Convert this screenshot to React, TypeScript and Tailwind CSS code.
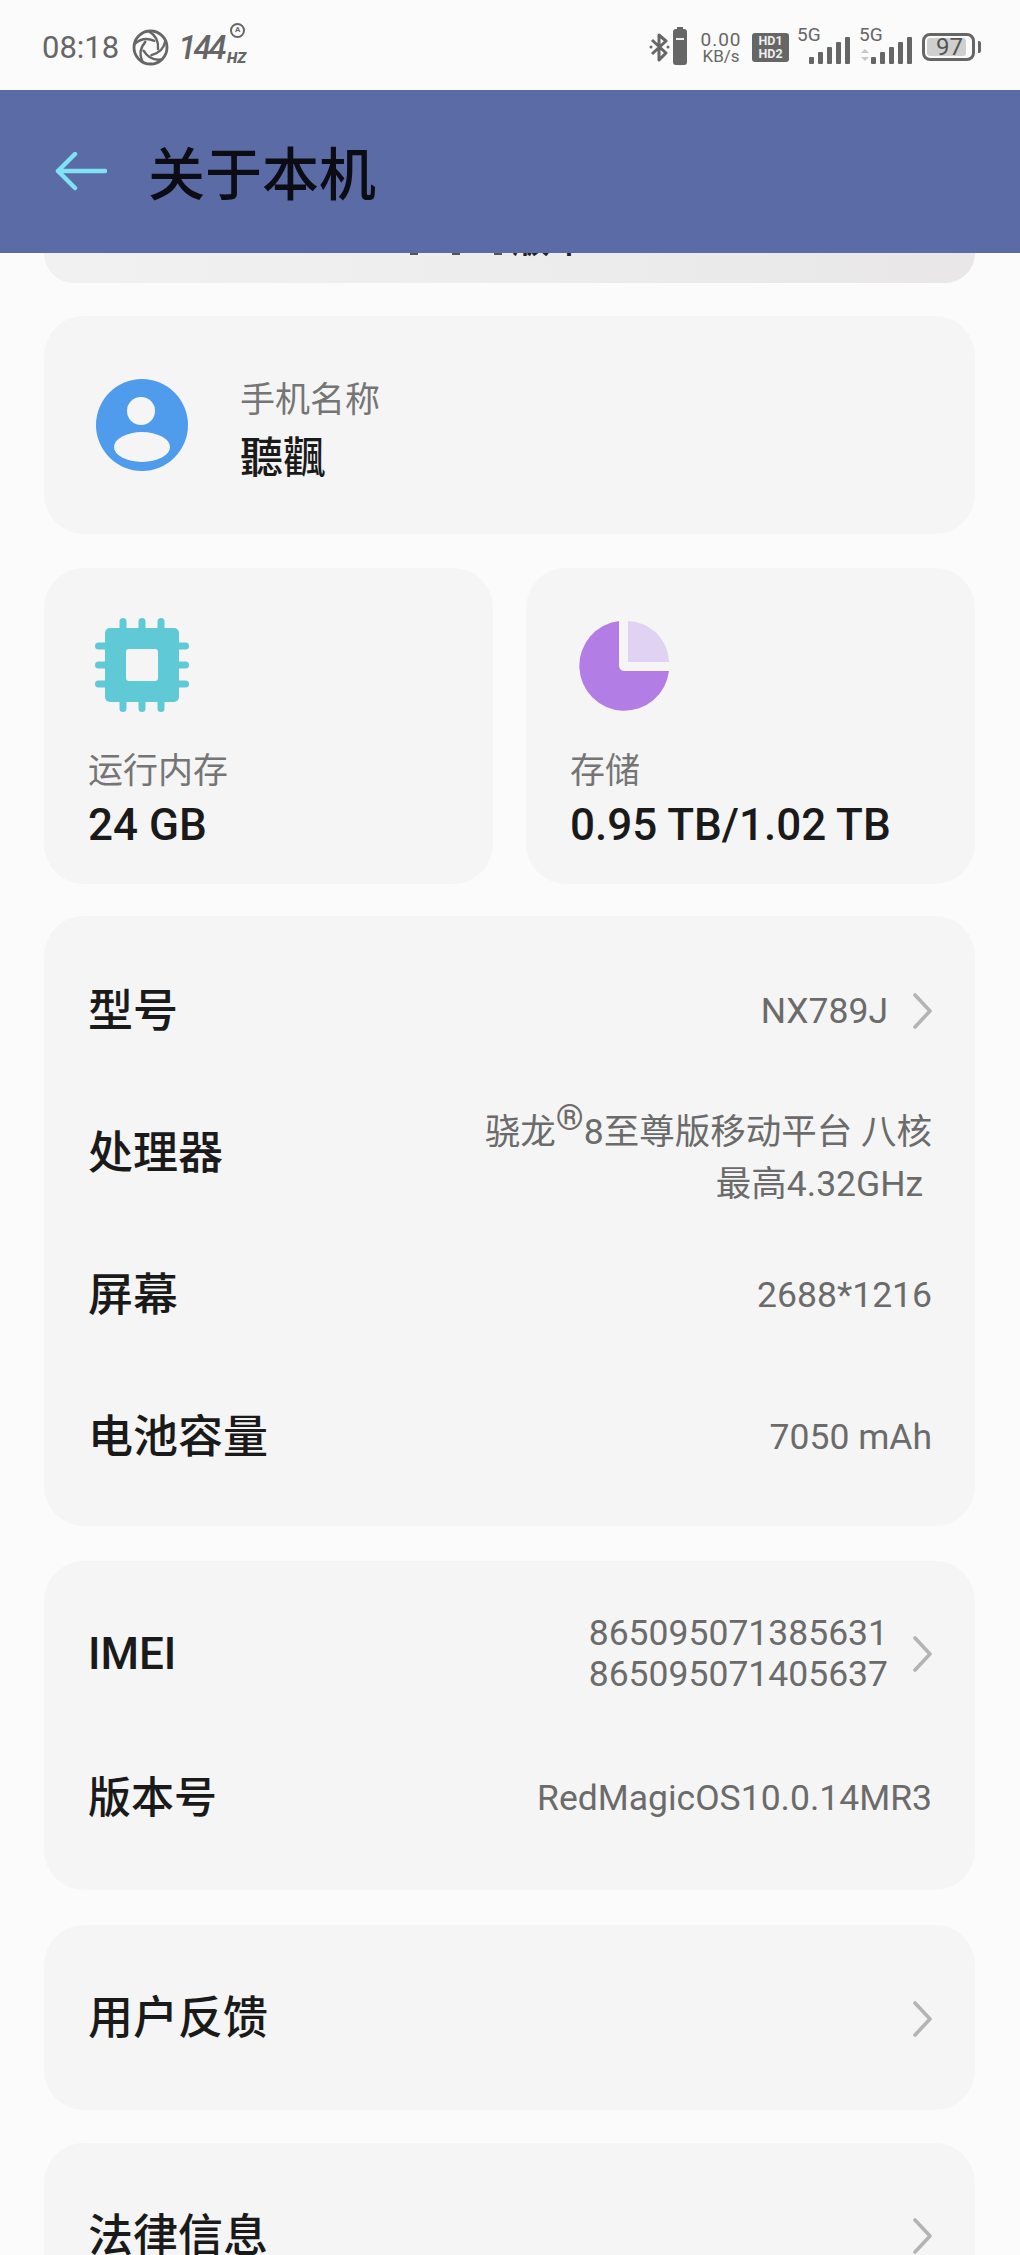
import React from "react";

const LATIN = "font-['Roboto','Noto_Sans_CJK_SC',sans-serif]";

function Chevron() {
  return (
    <svg width="19" height="36" viewBox="0 0 19 36" className="shrink-0">
      <path d="M2 2 L17 18 L2 34" fill="none" stroke="#b4b4b4" strokeWidth="3.6" strokeLinecap="round" strokeLinejoin="round" />
    </svg>
  );
}

function Row({ label, children, h, chevron, size = "text-[45px]" }: { label: string; children?: React.ReactNode; h: string; chevron?: boolean; size?: string }) {
  return (
    <div className={`flex items-center justify-between ${h}`}>
      <div className={`${size} font-medium leading-none text-[#1a1a1a]`}>{label}</div>
      <div className="flex items-center gap-[25px]">
        {children}
        {chevron ? <Chevron /> : null}
      </div>
    </div>
  );
}

function Val({ children }: { children: React.ReactNode }) {
  return <div className="text-[35.5px] leading-[52px] text-[#6b6b6b] text-right">{children}</div>;
}

function Aperture() {
  return (
    <svg width="37" height="37" viewBox="0 0 37 37" fill="none" stroke="#666" strokeWidth="2.4" strokeLinecap="round">
      <circle cx="18.5" cy="18.5" r="16.5" strokeWidth="2.8" />
      {[0, 72, 144, 216, 288].map((a) => (
        <path key={a} d="M17 2.5 Q27 8 26 20" transform={`rotate(${a} 18.5 18.5)`} />
      ))}
    </svg>
  );
}

function Signal({ updown }: { updown?: boolean }) {
  const bars = [7, 12, 17, 22, 27];
  return (
    <div className="relative w-[53px] h-[33px]">
      <span className="absolute left-0 top-[-6px] text-[19px] leading-[20px] text-[#666]">5G</span>
      {updown ? (
        <svg className="absolute left-[1px] top-[17px]" width="10" height="14" viewBox="0 0 10 14">
          <path d="M5 1 L9 5 H1 Z M5 13 L9 9 H1 Z" fill="#c8c8c8" />
        </svg>
      ) : null}
      <div className="absolute right-0 bottom-0 flex items-end gap-[4px]">
        {bars.map((b) => (
          <div key={b} className="w-[5px] bg-[#666] rounded-[1px]" style={{ height: b }} />
        ))}
      </div>
    </div>
  );
}

function StatusBar() {
  return (
    <div className={`flex items-center justify-between h-[90px] pl-[42px] pr-[45px] pt-[4px] ${LATIN}`}>
      <div className="flex items-center text-[#666]">
        <span className="text-[31px] leading-none">08:18</span>
        <span className="ml-[13px] flex"><Aperture /></span>
        <div className="relative ml-[9px] w-[68px] h-[36px]">
          <span className="absolute left-0 top-[3px] text-[33px] leading-[32px] italic font-medium tracking-[-3px]">144</span>
          <span className="absolute right-0 bottom-[0px] text-[15px] leading-[14px] italic font-black">HZ</span>
          <span className="absolute right-[1px] top-[-6px] w-[15px] h-[15px] rounded-full border-[2.5px] border-[#666] text-[8px] leading-[10px] text-center font-bold">A</span>
        </div>
      </div>
      <div className="flex items-center">
        <svg width="21" height="30" viewBox="0 0 21 30" fill="none" stroke="#666" strokeWidth="3">
          <path d="M3 8 L17 21 L10 28 V3 L17 9 L3 22" strokeLinejoin="round" />
          <circle cx="2" cy="15" r="1.5" fill="#666" stroke="none" />
          <circle cx="19" cy="15" r="1.5" fill="#666" stroke="none" />
        </svg>
        <div className="relative ml-[3px] w-[14px] h-[36px] bg-[#666] rounded-[3px]">
          <div className="absolute left-[4px] top-[-2px] w-[6px] h-[3px] bg-[#666]" />
          <div className="absolute left-[3px] top-[9px] w-[8px] h-[2px] bg-[#eee]" />
        </div>
        <div className="ml-[14px] w-[40px] flex flex-col items-center text-[#666]">
          <span className="text-[19px] leading-[17px] tracking-[1px]">0.00</span>
          <span className="text-[17px] leading-[16px]">KB/s</span>
        </div>
        <div className="ml-[11px] w-[37px] h-[29px] rounded-[3px] bg-[#666] flex flex-col items-center justify-center text-[#eee] text-[12.5px] leading-[13px] font-bold">
          <span>HD1</span>
          <span>HD2</span>
        </div>
        <div className="ml-[8px]"><Signal /></div>
        <div className="ml-[9px]"><Signal updown /></div>
        <div className="relative ml-[10px] w-[53px] h-[28px] border-[3px] border-[#666] rounded-[8px] flex items-center">
          <div className="ml-[2px] w-[39px] h-[18px] bg-[#cfcfcf] rounded-[3px]" />
          <span className="absolute left-[11px] top-[0px] text-[24px] leading-[22px] text-[#555]">97</span>
          <div className="absolute right-[-9px] top-[5px] w-[3px] h-[12px] bg-[#666] rounded-r-[2px]" />
        </div>
      </div>
    </div>
  );
}

function Header() {
  return (
    <div className="flex items-center h-[163px] bg-[#5b6ba5] pl-[55px]">
      <svg width="52" height="40" viewBox="0 0 52 40" fill="none" stroke="#7fe3f5" strokeWidth="4.5" strokeLinecap="round" strokeLinejoin="round">
        <path d="M50 19 H3 M20 2 L3 19 L20 36" />
      </svg>
      <div className="ml-[41px] mt-[7px] text-[57px] font-medium leading-none text-[#0c0c14]">关于本机</div>
    </div>
  );
}

function Chip() {
  return (
    <svg width="94" height="94" viewBox="0 0 94 94" fill="#5fc9d6">
      <rect x="10" y="10" width="74" height="74" rx="5" />
      {[28, 47, 66].map((p) => (
        <g key={p}>
          <rect x={p - 3.5} y="0" width="7" height="14" rx="3.5" />
          <rect x={p - 3.5} y="80" width="7" height="14" rx="3.5" />
          <rect x="0" y={p - 3.5} width="14" height="7" rx="3.5" />
          <rect x="80" y={p - 3.5} width="14" height="7" rx="3.5" />
        </g>
      ))}
      <rect x="31" y="31" width="32" height="32" rx="3" fill="#f5f5f5" />
    </svg>
  );
}

function Pie() {
  return (
    <svg width="92" height="92" viewBox="0 0 92 92">
      <path d="M41 1 A45 45 0 1 0 91 51 H47 Q41 51 41 45 Z" fill="#b37de6" />
      <path d="M50 1 A42 42 0 0 1 91 42 H50 Z" fill="#e0d2f2" />
    </svg>
  );
}

function Avatar() {
  return (
    <svg width="92" height="92" viewBox="0 0 92 92">
      <circle cx="46" cy="46" r="46" fill="#4f9bec" />
      <circle cx="45" cy="32" r="14" fill="#f5f5f5" />
      <ellipse cx="46" cy="68" rx="28" ry="15" fill="#f5f5f5" />
    </svg>
  );
}

export default function App() {
  return (
    <div className={`w-[1020px] h-[2255px] overflow-hidden bg-[#fbfbfb] ${LATIN}`}>
      <StatusBar />
      <Header />
      <div className="pl-[44px] pr-[45px]">
        <div className="relative h-[30px] rounded-b-[36px] overflow-hidden bg-gradient-to-r from-[#f1f1f1] via-[#ededed] to-[#e9e7e7]">
          <div className="absolute left-[366px] top-0 flex gap-[34px]">
            <div className="w-[8px] h-[2px] bg-[#555]" />
            <div className="w-[8px] h-[2px] bg-[#555]" />
            <div className="w-[8px] h-[2px] bg-[#555]" />
          </div>
          <div className="absolute left-[468px] top-[-36px] text-[38px] leading-[44px] font-medium text-[#222] whitespace-nowrap">版本</div>
        </div>

        <div className="mt-[33px] flex items-center h-[218px] rounded-[40px] bg-[#f5f5f5] pl-[52px]">
          <Avatar />
          <div className="ml-[52px] mt-[8px] flex flex-col">
            <div className="text-[35px] leading-[50px] text-[#757575]">手机名称</div>
            <div className="text-[43px] leading-[56px] font-medium text-[#1a1a1a] font-['Noto_Sans_CJK_TC',sans-serif]">聽飌</div>
          </div>
        </div>

        <div className="mt-[34px] grid grid-cols-2 gap-[33px]">
          <div className="h-[316px] rounded-[40px] bg-[#f5f5f5] pl-[44px] pt-[50px]">
            <div className="ml-[7px]"><Chip /></div>
            <div className="mt-[35px] text-[35px] leading-[50px] text-[#757575]">运行内存</div>
            <div className="mt-[3px] text-[44px] leading-[50px] font-medium text-[#1a1a1a]">24 GB</div>
          </div>
          <div className="h-[316px] rounded-[40px] bg-[#f5f5f5] pl-[44px] pt-[52px]">
            <div className="ml-[8px]"><Pie /></div>
            <div className="mt-[35px] text-[35px] leading-[50px] text-[#757575]">存储</div>
            <div className="mt-[3px] text-[44px] leading-[50px] font-medium text-[#1a1a1a]">0.95 TB/1.02 TB</div>
          </div>
        </div>

        <div className="mt-[32px] rounded-[40px] bg-[#f5f5f5] pl-[44px] pr-[43px] pt-[24px] h-[610px]">
          <Row label="型号" h="h-[142px]" chevron>
            <Val>NX789J</Val>
          </Row>
          <Row label="处理器" h="h-[142px]">
            <div className="mt-[10px]">
              <Val>
                骁龙<span className="relative -top-[14px]">®</span>8至尊版移动平台 八核
                <br />
                最高4.32GHz&nbsp;
              </Val>
            </div>
          </Row>
          <Row label="屏幕" h="h-[142px]">
            <Val>2688*1216</Val>
          </Row>
          <Row label="电池容量" h="h-[142px]">
            <Val>7050 mAh</Val>
          </Row>
        </div>

        <div className="mt-[35px] rounded-[40px] bg-[#f5f5f5] pl-[44px] pr-[43px] pt-[23px] h-[329px]">
          <Row label="IMEI" h="h-[140px]" size="text-[44px]" chevron>
            <div className="text-[35.5px] leading-[41px] text-[#6b6b6b] text-right">
              865095071385631
              <br />
              865095071405637
            </div>
          </Row>
          <Row label="版本号" h="h-[148px]" size="text-[43px]">
            <Val>RedMagicOS10.0.14MR3</Val>
          </Row>
        </div>

        <div className="mt-[35px] rounded-[40px] bg-[#f5f5f5] pl-[44px] pr-[43px] pt-[2px] flex flex-col justify-center h-[185px]">
          <Row label="用户反馈" h="h-[130px]" chevron />
        </div>

        <div className="mt-[33px] rounded-[40px] bg-[#f5f5f5] pl-[44px] pr-[43px] pt-[28px] h-[185px]">
          <Row label="法律信息" h="h-[130px]" chevron />
        </div>
      </div>
    </div>
  );
}
